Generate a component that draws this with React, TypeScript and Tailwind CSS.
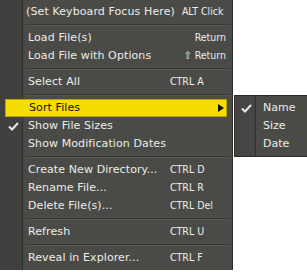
import React from "react";

type Item =
  | { sep: true }
  | {
      label: string;
      key?: string;
      keyAlign?: "left" | "right";
      keyPad?: string;
      checked?: boolean;
      active?: boolean;
      sub?: boolean;
    };

const items: Item[] = [
  { label: "(Set Keyboard Focus Here)", key: "ALT Click", keyPad: "pl-[7px]" },
  { sep: true },
  { label: "Load File(s)", key: "Return", keyAlign: "right" },
  { label: "Load File with Options", key: "⇧ Return", keyAlign: "right" },
  { sep: true },
  { label: "Select All", key: "CTRL A" },
  { sep: true },
  { label: "Sort Files", active: true, sub: true },
  { label: "Show File Sizes", checked: true },
  { label: "Show Modification Dates" },
  { sep: true },
  { label: "Create New Directory...", key: "CTRL D" },
  { label: "Rename File...", key: "CTRL R" },
  { label: "Delete File(s)...", key: "CTRL Del" },
  { sep: true },
  { label: "Refresh", key: "CTRL U" },
  { sep: true },
  { label: "Reveal in Explorer...", key: "CTRL F" },
];

function Check() {
  return (
    <svg width="11" height="9" viewBox="0 0 11 9">
      <path d="M1 4.5 L4 7.5 L10 1" fill="none" stroke="#e8e8e6" strokeWidth="2" />
    </svg>
  );
}

export default function App() {
  return (
    <div
      className="relative w-[307px] h-[272px] bg-white overflow-hidden text-[11px] text-[#ececea]"
      style={{ fontFamily: '"DejaVu Sans", sans-serif' }}
    >
      <div className="w-[233px] h-[270px] border-r border-[#2c2d2a] py-[3px] bg-[linear-gradient(to_right,#40413e_22px,#2f302d_22px,#2f302d_23px,#4a4b47_23px)]">
        {items.map((it, i) =>
          "sep" in it ? (
            <div key={i} className="h-[8px] flex items-center pl-[26px] pr-[2px]">
              <div className="h-[2px] w-full border-t border-[#353633] border-b border-b-[#575854]" />
            </div>
          ) : (
            <div key={i} className="h-[18px] px-[5px]">
              <div
                className={
                  it.active
                    ? "h-full flex items-center bg-[#f6dd00] border border-[#b8a400] text-[#111]"
                    : "h-full flex items-center"
                }
              >
                <div className="w-[23px] flex justify-start pl-[3px]">
                  {it.checked && <Check />}
                </div>
                <div className="flex-1 whitespace-nowrap tracking-[0.1px]">{it.label}</div>
                {it.key && (
                  <div
                    className={
                      "w-[57px] whitespace-nowrap text-[10.5px] font-['DejaVu_Sans_Condensed',sans-serif] " +
                      (it.keyAlign === "right" ? "text-right pr-[1px] " : "text-left ") +
                      (it.keyPad ?? "")
                    }
                  >
                    {it.key}
                  </div>
                )}
                {it.sub && (
                  <svg width="6" height="8" viewBox="0 0 6 8" className="mr-[2px]">
                    <path d="M0 0 L6 4 L0 8 Z" fill="#111" />
                  </svg>
                )}
              </div>
            </div>
          )
        )}
      </div>

      <div className="absolute left-[234px] top-[95px] w-[80px] h-[62px] border border-[#2c2d2a] py-[3px] bg-[linear-gradient(to_right,#454643_20px,#2f302d_20px,#2f302d_21px,#4a4b47_21px)]">
        {[
          { label: "Name", checked: true },
          { label: "Size" },
          { label: "Date" },
        ].map((s) => (
          <div key={s.label} className="h-[18px] flex items-center">
            <div className="w-[21px] flex justify-center pl-[2px]">
              {s.checked && <Check />}
            </div>
            <div className="pl-[7px] whitespace-nowrap">{s.label}</div>
          </div>
        ))}
      </div>
    </div>
  );
}
